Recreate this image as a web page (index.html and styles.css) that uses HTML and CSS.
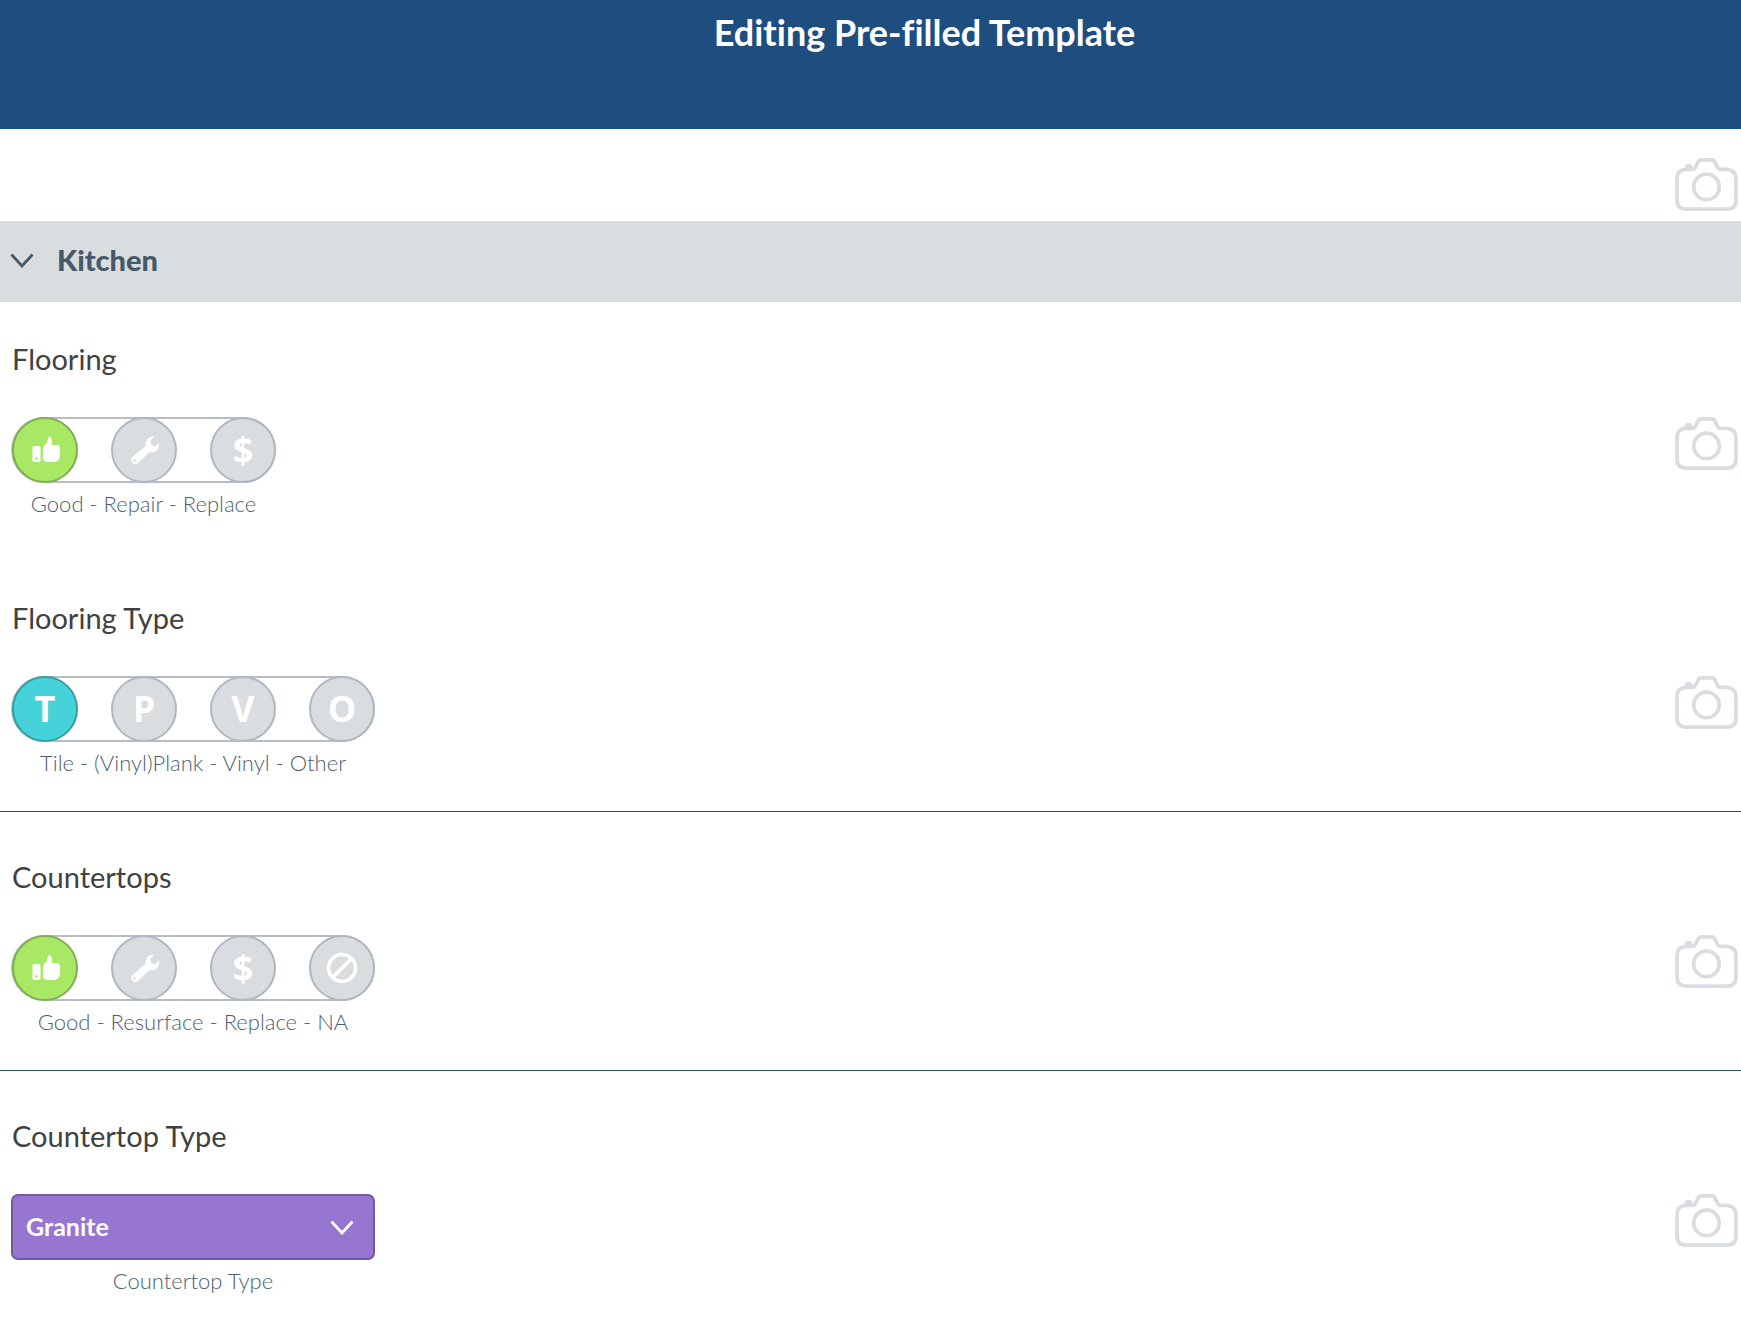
FILE: index.html
```html
<!DOCTYPE html>
<html lang="en">
<head>
<meta charset="utf-8">
<meta name="viewport" content="width=device-width, initial-scale=1">
<title>Editing Pre-filled Template</title>
<link rel="stylesheet" href="styles.css">
</head>
<body>
<svg class="sprite" aria-hidden="true">
  <symbol id="camera" viewBox="0 0 64 54">
    <path d="M10 11.500H18C20 11.500 20.500 10 21.500 8L23.500 4Q24.500 2 27 2H37Q39.500 2 40.500 4L42.500 8C43.500 10 44 11.500 46 11.500H53Q62 12.500 62 21V43Q62 52 53 52H11Q2 52 2 43V21Q2 12.500 10 11.500Z" fill="none" stroke="currentColor" stroke-width="3.800"/>
    <path d="M10 11V8.500Q10 6 12.500 6H15Q17.500 6 17.500 8.500V11Z" fill="currentColor"/>
    <circle cx="32" cy="29.500" r="13" fill="none" stroke="currentColor" stroke-width="3.800"/>
  </symbol>
  <symbol id="chevron" viewBox="0 0 24 16">
    <path d="M1.500 2.500L12 14L22.500 2.500" fill="none" stroke="currentColor" stroke-width="2.800"/>
  </symbol>
  <symbol id="thumb" viewBox="0 0 66 66">
    <path fill="currentColor" fill-rule="evenodd" d="M22 29H27Q28.500 29 28.500 30.500V43.500Q28.500 45 27 45H22Q20.500 45 20.500 43.500V30.500Q20.500 29 22 29ZM24.500 40A1.300 1.300 0 1 0 24.510 40Z"/>
    <path fill="currentColor" d="M31 32Q31 29 33.500 27.500Q35.500 26 35.700 22.500Q36 20 37.500 20Q39.500 20 39.800 24V28H45Q48 28.500 48 31.500V39Q47.500 44 43 45H36Q31 45 31 41Z"/>
  </symbol>
  <symbol id="wrench" viewBox="0 0 66 66">
    <path fill="currentColor" fill-rule="evenodd" d="M43 19.500L39.500 23.500L40.500 28.500L44.500 29L48 25.500Q49 31.500 44.500 34.500Q41.500 36 38.500 35L27 46Q24 48 21.500 46Q19 43 21 40.500L34.500 29Q34 25 36.500 22Q39 19 43 19.500ZM23.500 42.200A1.300 1.300 0 1 0 23.510 42.200Z"/>
  </symbol>
  <symbol id="none" viewBox="0 0 66 66">
    <path d="M46.500 33A13.500 13.500 0 1 1 19.500 33A13.500 13.500 0 1 1 46.500 33ZM42.500 23.500L23.500 42.500" fill="none" stroke="currentColor" stroke-width="3.600"/>
  </symbol>
</svg>

<header class="topbar"><h1 class="topbar-title">Editing Pre-filled Template</h1></header>

<main>
  <div class="photo-row">
    <button class="camera" type="button" aria-label="Add photo"><svg><use href="#camera"/></svg></button>
  </div>

  <h2 class="section">
    <button class="section-toggle" type="button" aria-expanded="true"><svg class="chevron"><use href="#chevron"/></svg>Kitchen</button>
  </h2>

  <div class="items">
    <section class="item item-first">
      <h3 class="item-title" id="flooring">Flooring</h3>
      <div class="item-body">
        <div class="field">
          <div class="scale" role="radiogroup" aria-labelledby="flooring">
            <label class="option good"><input type="radio" name="flooring" aria-label="Good" checked><svg><use href="#thumb"/></svg></label>
            <label class="option"><input type="radio" name="flooring" aria-label="Repair"><svg><use href="#wrench"/></svg></label>
            <label class="option"><input type="radio" name="flooring" aria-label="Replace"><span>$</span></label>
          </div>
          <p class="caption">Good - Repair - Replace</p>
        </div>
        <button class="camera" type="button" aria-label="Add photo of flooring"><svg><use href="#camera"/></svg></button>
      </div>
    </section>

    <section class="item ruled">
      <h3 class="item-title" id="flooring-type">Flooring Type</h3>
      <div class="item-body">
        <div class="field">
          <div class="scale" role="radiogroup" aria-labelledby="flooring-type">
            <label class="option kind"><input type="radio" name="flooring-type" aria-label="Tile" checked><span>T</span></label>
            <label class="option"><input type="radio" name="flooring-type" aria-label="Vinyl plank"><span>P</span></label>
            <label class="option"><input type="radio" name="flooring-type" aria-label="Vinyl"><span>V</span></label>
            <label class="option"><input type="radio" name="flooring-type" aria-label="Other"><span>O</span></label>
          </div>
          <p class="caption">Tile - (Vinyl)Plank - Vinyl - Other</p>
        </div>
        <button class="camera" type="button" aria-label="Add photo of flooring type"><svg><use href="#camera"/></svg></button>
      </div>
    </section>

    <section class="item ruled">
      <h3 class="item-title" id="countertops">Countertops</h3>
      <div class="item-body">
        <div class="field">
          <div class="scale" role="radiogroup" aria-labelledby="countertops">
            <label class="option good"><input type="radio" name="countertops" aria-label="Good" checked><svg><use href="#thumb"/></svg></label>
            <label class="option"><input type="radio" name="countertops" aria-label="Resurface"><svg><use href="#wrench"/></svg></label>
            <label class="option"><input type="radio" name="countertops" aria-label="Replace"><span>$</span></label>
            <label class="option"><input type="radio" name="countertops" aria-label="Not applicable"><svg><use href="#none"/></svg></label>
          </div>
          <p class="caption">Good - Resurface - Replace - NA</p>
        </div>
        <button class="camera" type="button" aria-label="Add photo of countertops"><svg><use href="#camera"/></svg></button>
      </div>
    </section>

    <section class="item item-last">
      <h3 class="item-title">Countertop Type</h3>
      <div class="item-body">
        <div class="field">
          <div class="picker">
            <select class="picker-select" id="countertop-type"><option>Granite</option></select>
            <svg class="chevron picker-chevron"><use href="#chevron"/></svg>
          </div>
          <label class="caption" for="countertop-type">Countertop Type</label>
        </div>
        <button class="camera" type="button" aria-label="Add photo of countertop type"><svg><use href="#camera"/></svg></button>
      </div>
    </section>
  </div>
</main>
</body>
</html>
```

FILE: styles.css
```css
* { box-sizing: border-box; }

body {
  margin: 0;
  background: #fff;
  color: #414141;
  font-family: Lato, "Open Sans", sans-serif;
  font-variant-ligatures: none;
}

h1, h2, h3, p { margin: 0; }

button {
  border: 0;
  padding: 0;
  background: none;
  font: inherit;
  color: inherit;
}

.sprite { display: none; }

.topbar {
  height: 129px;
  padding: 10px 0 0 108px;
  background: #1e4d80;
  color: #fff;
  text-align: center;
}

.topbar-title {
  font-size: 36px;
  line-height: 44px;
  font-weight: 700;
}

.photo-row {
  display: flex;
  justify-content: flex-end;
  height: 92px;
  padding: 29px 3px 0 0;
}

.camera {
  flex: none;
  width: 63px;
  height: 53px;
  color: #d9dce0;
}

.camera svg { display: block; width: 63px; height: 53px; }

.section {
  background: #d9dde0;
  color: #465a69;
  font-size: 29px;
  line-height: 36px;
  font-weight: 900;
}

.section-toggle {
  display: flex;
  align-items: center;
  gap: 23px;
  width: 100%;
  height: 81px;
  padding: 0 10px 4px;
  font-variant-ligatures: none;
}

.chevron { flex: none; width: 24px; height: 16px; }

.item {
  height: 259px;
  padding: 47px 3px 0 11px;
  border-bottom: 1px solid transparent;
}

.item-first { height: 251px; padding-top: 39px; }
.item-last { height: auto; }
.ruled { border-bottom-color: #274f6f; }

.item-title {
  padding-left: 1px;
  font-size: 29px;
  line-height: 36px;
  font-weight: 400;
}

.item-body {
  display: flex;
  justify-content: space-between;
  align-items: flex-start;
  padding-top: 40px;
}

.field { display: flex; flex-direction: column; }

.scale {
  display: flex;
  gap: 33px;
  padding-left: 1px;
  border-radius: 33px;
  box-shadow: inset 0 0 0 2px #b6bdc6;
}

.option {
  position: relative;
  display: grid;
  place-items: center;
  width: 66px;
  height: 66px;
  border: 2px solid #b0b7c0;
  border-radius: 50%;
  background: #d9dde0;
  color: #fff;
  font: 700 36px/44px "Open Sans", sans-serif;
}

.option input {
  position: absolute;
  inset: 0;
  margin: 0;
  opacity: 0;
}

.option svg { width: 66px; height: 66px; margin: -2px; }

.good { background: #a9e865; border-color: #7fb04d; }
.kind { background: #45d3d9; border-color: #359fa5; }

.caption {
  padding-top: 7px;
  color: #4c5f70;
  font-size: 22px;
  line-height: 28px;
  font-weight: 300;
  text-align: center;
}

.picker { position: relative; width: 364px; }

.picker-select {
  display: block;
  appearance: none;
  width: 100%;
  height: 66px;
  padding: 0 60px 3px 13px;
  border: 2px solid #715a9e;
  border-radius: 7px;
  background: #9776d1;
  color: #fff;
  font: 700 25px/32px Lato, "Open Sans", sans-serif;
}

.picker-chevron {
  position: absolute;
  right: 21px;
  top: 25px;
  color: #fff;
  pointer-events: none;
}
```
